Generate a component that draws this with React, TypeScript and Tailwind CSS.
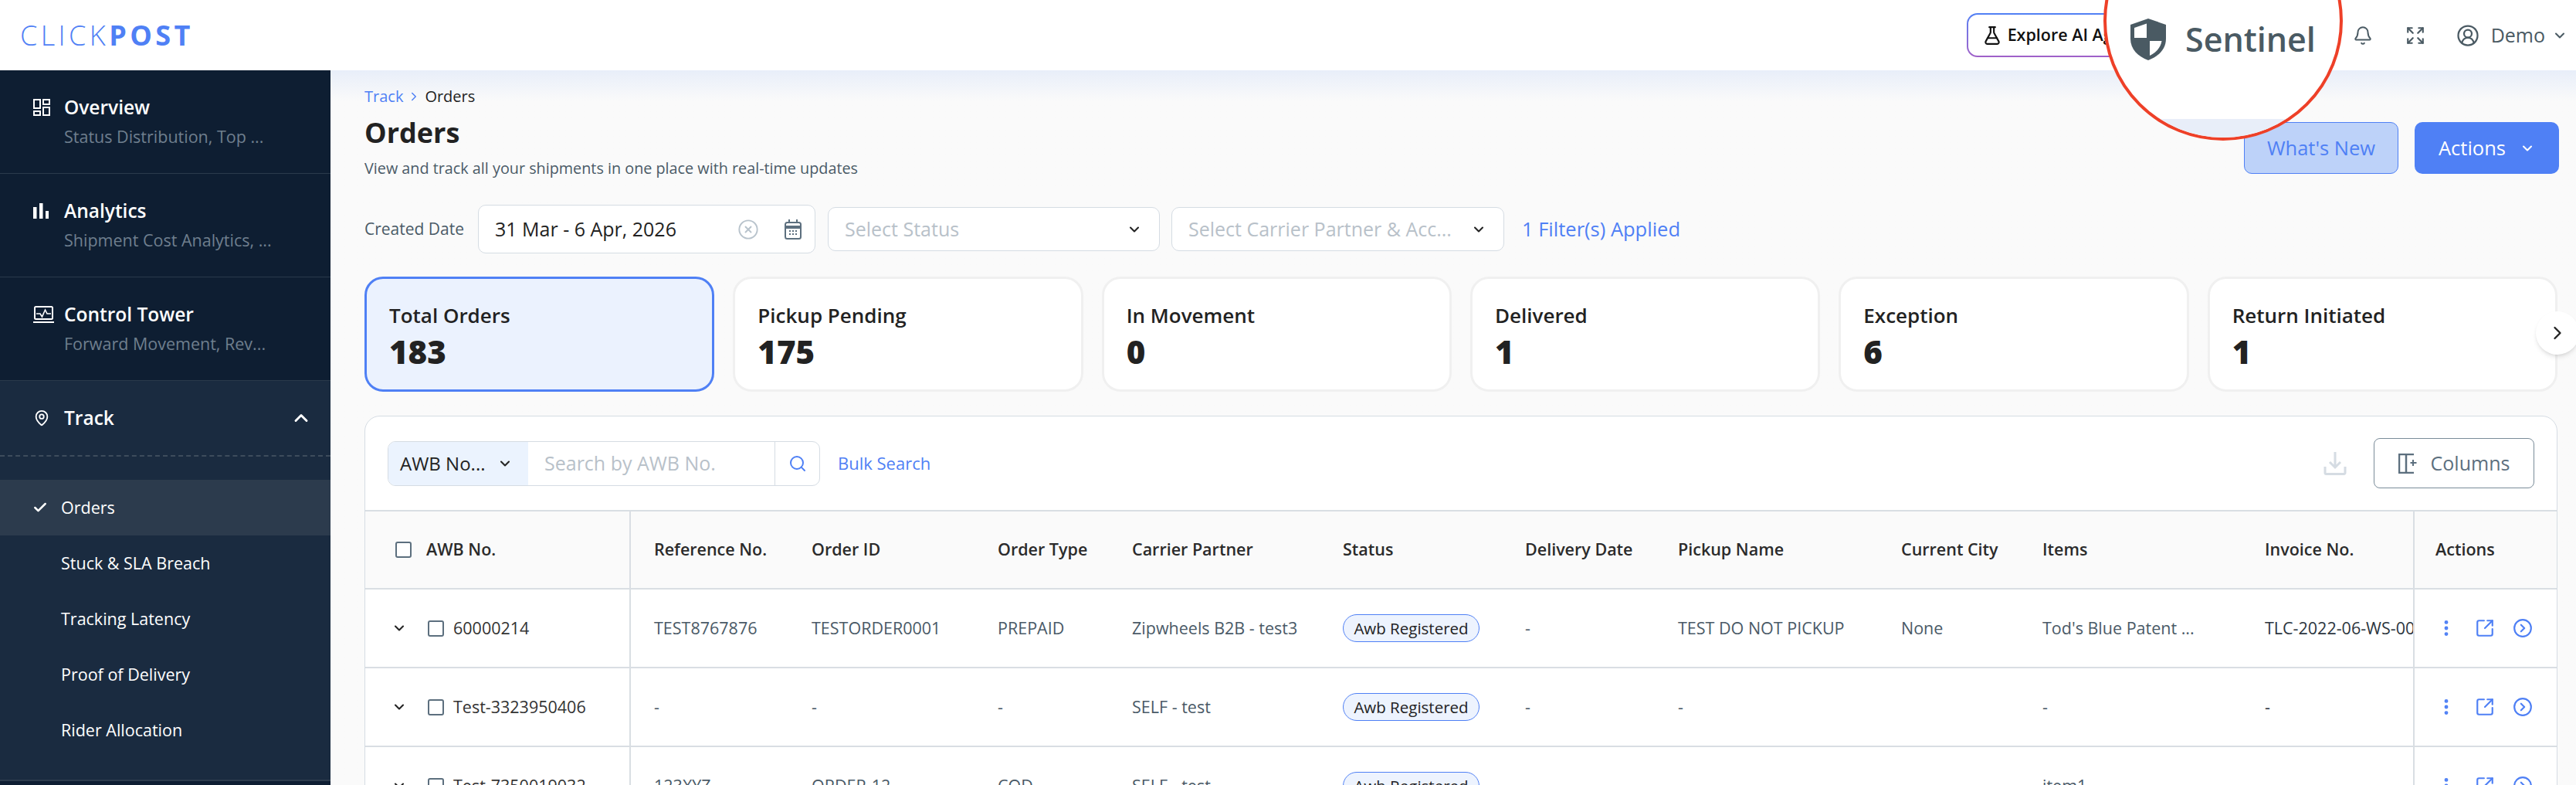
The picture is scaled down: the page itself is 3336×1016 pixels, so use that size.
import { Bell, Check, ChevronDown, ChevronRight, ChevronUp, CircleChevronRight, CircleUserRound, CircleX, EllipsisVertical, Expand, FlaskConical, MapPin, Search, SquareArrowOutUpRight } from 'lucide-react'

const gridCols = 'grid grid-cols-[342px_206px_241px_174px_273px_236px_198px_289px_183px_288px_222px_186px]'

const OverviewIcon = () => (
  <svg width="22" height="22" viewBox="0 0 22 22" fill="none" stroke="white" strokeWidth="2">
    <rect x="1" y="1" width="8" height="11" />
    <rect x="13" y="1" width="8" height="6" />
    <rect x="1" y="16" width="8" height="5" />
    <rect x="13" y="11" width="8" height="10" />
  </svg>
)

const BarsIcon = () => (
  <svg width="20" height="20" viewBox="0 0 20 20" fill="white">
    <rect x="0" y="5" width="4.5" height="15" />
    <rect x="8" y="0" width="4.5" height="20" />
    <rect x="16" y="10" width="4" height="10" />
  </svg>
)

const TowerIcon = () => (
  <svg width="27" height="22" viewBox="0 0 27 22" fill="none" stroke="white" strokeWidth="2">
    <rect x="2" y="1" width="23" height="16" rx="1.5" />
    <path d="M0 21h27" />
    <path d="M4 10h5l2.5 4 4-9 2.5 5h5" strokeWidth="1.6" />
  </svg>
)

const CalendarIcon = () => (
  <svg width="22" height="26" viewBox="0 0 22 26" fill="none" stroke="#5c6f7e" strokeWidth="2">
    <rect x="1" y="4" width="20" height="21" rx="2.5" />
    <path d="M1 10h20" strokeWidth="4" />
    <path d="M6 0v5M16 0v5" />
    <path d="M6 15h2M10 15h2M14 15h2M6 19h2M10 19h2M14 19h2" />
  </svg>
)

const ShieldIcon = () => (
  <svg width="46" height="54" viewBox="0 0 46 54">
    <path d="M23 0L46 8V26C46 40 36 49 23 54C10 49 0 40 0 26V8Z" fill="#4a5a63" />
    <path d="M21 6.5L5 12V25H21Z" fill="white" />
    <path d="M25 29H40.5C39 38 33 44 25 48Z" fill="white" />
  </svg>
)

const DownloadIcon = () => (
  <svg width="30" height="30" viewBox="0 0 30 30" fill="none" stroke="#d5dce3" strokeWidth="3">
    <path d="M15 0V20M8 13l7 7 7-7" />
    <path d="M2 19v8a1.5 1.5 0 0 0 1.5 1.5h23A1.5 1.5 0 0 0 28 27v-8" />
  </svg>
)

const ColumnsIcon = () => (
  <svg width="24" height="26" viewBox="0 0 24 26" fill="none" stroke="#5c6f7e" strokeWidth="2.5">
    <path d="M20 1H1v24h19" />
    <path d="M10 1v24" />
    <path d="M19 8v8M15.5 12h8" strokeWidth="2" />
  </svg>
)

const CheckBox = () => <span className="block h-[21px] w-[21px] shrink-0 rounded-[3px] border-2 border-[#5c6f7e] bg-white" />

const NavItem = ({ icon, title, sub }: { icon: React.ReactNode; title: string; sub: string }) => (
  <div className="flex h-[134px] border-b border-[#2a3a4c] pl-[43px] pt-[31px]">
    <div className="flex h-[34px] w-[40px] items-center">{icon}</div>
    <div>
      <div className="text-[24.5px] font-semibold leading-[34px] text-white">{title}</div>
      <div className="mt-[7px] text-[21.5px] leading-[28px] text-[#6f7f8e]">{sub}</div>
    </div>
  </div>
)

const Sidebar = () => {
  const subItems = ['Stuck & SLA Breach', 'Tracking Latency', 'Proof of Delivery', 'Rider Allocation']
  return (
    <aside className="h-[925px] w-[428px] shrink-0 bg-[#0e1e32]">
      <NavItem icon={<OverviewIcon />} title="Overview" sub="Status Distribution, Top ..." />
      <NavItem icon={<BarsIcon />} title="Analytics" sub="Shipment Cost Analytics, ..." />
      <NavItem icon={<TowerIcon />} title="Control Tower" sub="Forward Movement, Rev..." />
      <div className="border-b-2 border-[#2c3b4d] bg-[#1a2b40] pb-[28px]">
        <div className="flex h-[98px] items-center border-b-2 border-dashed border-[#3d4c5c] pl-[43px] pr-[24px]">
          <MapPin size={26} className="w-[22px] text-white" strokeWidth={2} />
          <span className="ml-[18px] flex-1 text-[24.5px] font-semibold text-white">Track</span>
          <ChevronUp size={28} strokeWidth={2.5} className="text-white" />
        </div>
        <div className="pt-[30px]">
          <div className="flex h-[72px] items-center bg-[#2c3b4d] pl-[42px] text-[21.5px] text-white">
            <Check size={20} strokeWidth={3} />
            <span className="ml-[17px]">Orders</span>
          </div>
          {subItems.map((item) => (
            <div key={item} className="flex h-[72px] items-center pl-[79px] text-[21.5px] text-white">
              {item}
            </div>
          ))}
        </div>
      </div>
    </aside>
  )
}

const StatCard = ({ title, value, active }: { title: string; value: string; active?: boolean }) => (
  <div className={active ? 'h-[149px] flex-1 rounded-[24px] border-[3px] border-[#4f80f5] bg-[#ebf2fe] pl-[29px] pt-[30px]' : 'h-[149px] flex-1 rounded-[24px] border-[3px] border-[#f0f0f0] bg-white pl-[29px] pt-[30px]'}>
    <div className="text-[26px] font-semibold leading-[34px] text-[#222]">{title}</div>
    <div className="mt-[4px] text-[42px] font-extrabold leading-[52px] text-[#222]">{value}</div>
  </div>
)

const Badge = () => (
  <span className="flex h-[36px] w-[177px] items-center justify-center rounded-full border border-[#4f80f5] bg-[#edf3fe] text-[20.5px] font-medium text-[#222]">Awb Registered</span>
)

const Row = ({ awb, cells }: { awb: string; cells: string[] }) => {
  const dark = [4, 9]
  return (
    <div className={`${gridCols} h-[102px] border-b-2 border-[#d9dee3] text-[21.5px]`}>
      <div className="flex items-center pl-[34px]">
        <ChevronDown size={20} strokeWidth={2.5} className="text-[#222]" />
        <span className="ml-[27px]"><CheckBox /></span>
        <span className="ml-[12px] text-[#333]">{awb}</span>
      </div>
      {cells.map((cell, index) => (
        <div key={index} className={`flex items-center overflow-hidden whitespace-nowrap pl-[30px] ${index === 0 ? 'border-l-2 border-[#d9dee3]' : ''} ${dark.includes(index) ? 'text-[#2d3640]' : 'text-[#4a5a67]'}`}>
          {cell === 'badge' ? <Badge /> : cell}
        </div>
      ))}
      <div className="flex items-center border-l-2 border-[#d9dee3] pl-[28px] text-[#4f80f5]">
        <EllipsisVertical size={26} strokeWidth={2.5} />
        <SquareArrowOutUpRight size={26} className="ml-[24px]" strokeWidth={2} />
        <CircleChevronRight size={26} className="ml-[23px]" strokeWidth={2} />
      </div>
    </div>
  )
}

const App = () => {
  const headers = ['Reference No.', 'Order ID', 'Order Type', 'Carrier Partner', 'Status', 'Delivery Date', 'Pickup Name', 'Current City', 'Items', 'Invoice No.']
  const cards = [
    { title: 'Pickup Pending', value: '175' },
    { title: 'In Movement', value: '0' },
    { title: 'Delivered', value: '1' },
    { title: 'Exception', value: '6' },
    { title: 'Return Initiated', value: '1' }
  ]

  return (
    <div className="relative h-[1016px] overflow-hidden bg-[#fafafa] font-['Open_Sans',sans-serif]">
      <header className="flex h-[91px] items-center bg-white pl-[26px] pr-[11px]">
        <div className="text-[36px] leading-none tracking-[4.4px] text-[#4f80f5]">
          <span className="font-light">CLICK</span>
          <span className="font-bold">POST</span>
        </div>
        <div className="ml-auto flex h-[57px] w-[400px] rounded-[14px] bg-linear-to-b from-[#4f80f5] to-[#a060c8] p-[2px]">
          <div className="flex flex-1 items-center rounded-[12px] bg-white pl-[18px] text-[21.5px] font-semibold text-[#111]">
            <FlaskConical size={26} strokeWidth={2} />
            <span className="ml-[7px]">Explore AI Agents</span>
          </div>
        </div>
        <Bell size={26} strokeWidth={1.8} className="ml-[100px] text-[#4a5a63]" />
        <Expand size={26} strokeWidth={2} className="ml-[42px] text-[#4a5a63]" />
        <CircleUserRound size={30} strokeWidth={1.8} className="ml-[40px] text-[#4a5a63]" />
        <span className="ml-[15px] text-[25px] text-[#4a5a63]">Demo</span>
        <ChevronDown size={20} strokeWidth={2.5} className="ml-[9px] text-[#4a5a63]" />
      </header>

      <div className="flex">
        <Sidebar />
        <main className="relative h-[925px] flex-1 overflow-hidden bg-linear-to-b from-[#e8eef9] to-[#fafafa] to-[40px] pl-[44px] pr-[24px] pt-[20px]">
          <div className="flex justify-between">
            <div>
              <div className="flex items-center text-[20px] leading-[28px]">
                <span className="text-[#4f80f5]">Track</span>
                <ChevronRight size={18} strokeWidth={2} className="mx-[5px] text-[#4f80f5]" />
                <span className="font-medium text-[#222]">Orders</span>
              </div>
              <h1 className="mt-[11px] text-[36px] font-bold leading-[44px] text-[#222]">Orders</h1>
              <p className="mt-[10px] text-[19.8px] leading-[28px] text-[#4a5a67]">View and track all your shipments in one place with real-time updates</p>
            </div>
            <div className="-mr-[2px] flex gap-[21px] pt-[47px]">
              <button className="h-[67px] w-[200px] rounded-[10px] border border-[#4f80f5] bg-[#bdd2f9] text-[25.5px] text-[#4f80f5]">What's New</button>
              <button className="flex h-[67px] w-[187px] items-center justify-center gap-[18px] rounded-[10px] bg-[#4f80f5] text-[25.5px] font-medium text-white">
                Actions
                <ChevronDown size={20} strokeWidth={2.5} />
              </button>
            </div>
          </div>

          <div className="mt-[33px] flex items-center">
            <span className="w-[147px] text-[21px] text-[#4a5a67]">Created Date</span>
            <div className="flex h-[63px] w-[437px] items-center rounded-[10px] border border-[#d5dce3] bg-white pl-[21px] pr-[17px]">
              <span className="flex-1 text-[25px] text-[#222]">31 Mar - 6 Apr, 2026</span>
              <CircleX size={28} strokeWidth={1.6} className="text-[#b8c3cc]" />
              <span className="ml-[33px]"><CalendarIcon /></span>
            </div>
            <div className="ml-[16px] flex h-[57px] w-[430px] items-center justify-between rounded-[10px] border border-[#d5dce3] bg-white pl-[21px] pr-[22px]">
              <span className="text-[25px] text-[#b8c1c9]">Select Status</span>
              <ChevronDown size={20} strokeWidth={2.5} className="text-[#222]" />
            </div>
            <div className="ml-[15px] flex h-[57px] w-[431px] items-center justify-between rounded-[10px] border border-[#d5dce3] bg-white pl-[21px] pr-[22px]">
              <span className="text-[25px] text-[#b8c1c9]">Select Carrier Partner &amp; Acc...</span>
              <ChevronDown size={20} strokeWidth={2.5} className="text-[#222]" />
            </div>
            <span className="ml-[23px] text-[25.5px] font-medium text-[#4f80f5]">1 Filter(s) Applied</span>
          </div>

          <div className="mt-[30px] flex gap-[24px]">
            <StatCard title="Total Orders" value="183" active />
            {cards.map((card) => (
              <StatCard key={card.title} title={card.title} value={card.value} />
            ))}
          </div>

          <section className="mt-[31px] rounded-t-[20px] border border-[#d5dce3] bg-white">
            <div className="flex h-[121px] items-center pl-[29px] pr-[29px]">
              <div className="flex h-[58px] w-[560px] items-center overflow-hidden rounded-[10px] border border-[#d5dce3]">
                <div className="flex h-full w-[181px] items-center bg-[#ebf3fe] pl-[15px] text-[24px] text-[#222]">
                  AWB No...
                  <ChevronDown size={20} strokeWidth={2.5} className="ml-[15px]" />
                </div>
                <div className="flex-1 pl-[21px] text-[25px] text-[#b8c1c9]">Search by AWB No.</div>
                <div className="flex h-full w-[58px] items-center justify-center border-l border-[#d5dce3] text-[#4f80f5]">
                  <Search size={24} strokeWidth={2} />
                </div>
              </div>
              <span className="ml-[23px] text-[22px] font-medium text-[#4f80f5]">Bulk Search</span>
              <span className="ml-auto"><DownloadIcon /></span>
              <button className="ml-[35px] flex h-[65px] w-[208px] items-center justify-center gap-[18px] rounded-[8px] border border-[#7a8c99] text-[25px] text-[#5c6f7e]">
                <ColumnsIcon />
                Columns
              </button>
            </div>

            <div className={`${gridCols} h-[103px] border-y-2 border-[#d9dee3] bg-[#fafafa] text-[21.5px] font-semibold text-[#2b2b2b]`}>
              <div className="flex items-center gap-[19px] pl-[39px]">
                <CheckBox />
                AWB No.
              </div>
              {headers.map((h, index) => (
                <div key={h} className={`flex items-center pl-[30px] ${index === 0 ? 'border-l-2 border-[#d9dee3]' : ''}`}>{h}</div>
              ))}
              <div className="flex items-center border-l-2 border-[#d9dee3] pl-[27px]">Actions</div>
            </div>

            <Row awb="60000214" cells={['TEST8767876', 'TESTORDER0001', 'PREPAID', 'Zipwheels B2B - test3', 'badge', '-', 'TEST DO NOT PICKUP', 'None', "Tod's Blue Patent ...", 'TLC-2022-06-WS-0001']} />
            <Row awb="Test-3323950406" cells={['-', '-', '-', 'SELF - test', 'badge', '-', '-', '', '-', '-']} />
            <Row awb="Test-7350019032" cells={['123XYZ', 'ORDER-12', 'COD', 'SELF - test', 'badge', '-', '-', '', 'item1', '-']} />
          </section>

          <div className="absolute left-[2856px] top-[312px] flex h-[56px] w-[56px] items-center justify-center rounded-full bg-white shadow-md">
            <ChevronRight size={28} strokeWidth={2} className="text-[#222]" />
          </div>
        </main>
      </div>

      <div className="absolute left-[2724px] top-[-128px] h-[310px] w-[310px] overflow-hidden rounded-full border-[4px] border-[#ee4028] bg-white">
        <div className="absolute inset-x-0 top-[278px] h-[40px] bg-[#e8eef9]" />
        <div className="absolute left-[31px] top-[148px] flex items-center gap-[25px]">
          <ShieldIcon />
          <span className="text-[43px] font-semibold leading-[54px] text-[#4a5a63]">Sentinel</span>
        </div>
      </div>
    </div>
  )
}

export default App
